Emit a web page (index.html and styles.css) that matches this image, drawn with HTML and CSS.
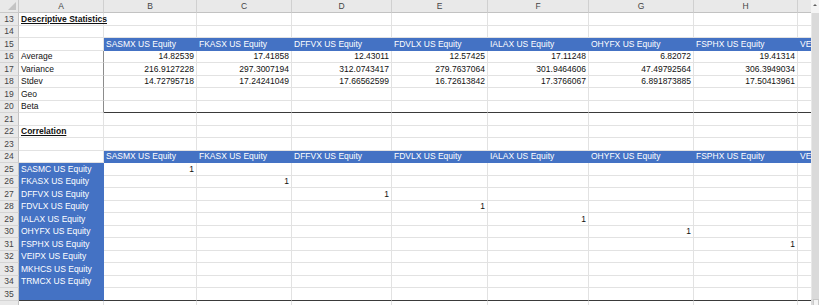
FILE: index.html
```html
<!DOCTYPE html>
<html lang="en">
<head>
    <meta charset="UTF-8">
    <title>Fund Statistics</title>
    <link rel="stylesheet" href="styles.css">
</head>
<body>
    <div class="window">
        <div class="sheet" id="sheet">
            <!-- cells are built by the script below -->
        </div>
        <div class="scrollbar">
            <div class="scroll-btn"><span class="arrow-up"></span></div>
            <div class="scroll-track"></div>
            <div class="scroll-end"></div>
        </div>
    </div>
    <script>
        const sheet = document.getElementById('sheet');
        const letters = ['A', 'B', 'C', 'D', 'E', 'F', 'G', 'H', 'I'];
        const tickers = ['SASMX', 'FKASX', 'DFFVX', 'FDVLX', 'IALAX', 'OHYFX', 'FSPHX', 'VEIPX'];
        const rowTickers = ['SASMC', 'FKASX', 'DFFVX', 'FDVLX', 'IALAX', 'OHYFX', 'FSPHX', 'VEIPX', 'MKHCS', 'TRMCX'];
        const stats = {
            16: ['Average', ['14.82539', '17.41858', '12.43011', '12.57425', '17.11248', '6.82072', '19.41314']],
            17: ['Variance', ['216.9127228', '297.3007194', '312.0743417', '279.7637064', '301.9464606', '47.49792564', '306.3949034']],
            18: ['Stdev', ['14.72795718', '17.24241049', '17.66562599', '16.72613842', '17.3766067', '6.891873885', '17.50413961']],
            19: ['Geo', []],
            20: ['Beta', []]
        };

        function cell(text, cls) {
            const div = document.createElement('div');
            div.className = 'cell' + (cls ? ' ' + cls : '');
            if (text) {
                const span = document.createElement('span');
                span.textContent = text;
                div.appendChild(span);
            }
            sheet.appendChild(div);
            return div;
        }

        // column headers
        cell('', 'corner');
        letters.forEach(l => cell(l, 'col-head'));

        for (let r = 13; r <= 35; r++) {
            cell(String(r), 'row-head');
            for (let c = 0; c < letters.length; c++) {
                let text = '';
                let cls = [];

                if (c === 0) {
                    if (r === 13) { text = 'Descriptive Statistics'; cls.push('title'); }
                    if (r === 22) { text = 'Correlation'; cls.push('title'); }
                    if (stats[r]) { text = stats[r][0]; cls.push('edge'); }
                    if (r >= 25 && r <= 35) {
                        cls.push('fill');
                        if (rowTickers[r - 25]) text = rowTickers[r - 25] + ' US Equity';
                    }
                } else {
                    if (r === 15 || r === 24) {
                        text = tickers[c - 1] + ' US Equity';
                        cls.push('fill');
                    }
                    if (stats[r] && stats[r][1][c - 1]) {
                        text = stats[r][1][c - 1];
                        cls.push('num');
                    }
                    if (r >= 25 && r - 25 === c - 1) {
                        text = '1';
                        cls.push('num');
                    }
                    if (r === 20) cls.push('rule');
                }
                if (r === 35) cls.push('rule');
                cell(text, cls.join(' '));
            }
        }

        // row 36 is only partly in view
        cell('', 'row-head');
        letters.forEach(() => cell(''));
    </script>
</body>
</html>
```

FILE: styles.css
```css
body {
    margin: 0;
    font-family: 'Liberation Sans', Arial, sans-serif;
    background-color: white;
    overflow: hidden;
}
.window {
    display: flex;
    width: 819px;
    height: 305px;
    overflow: hidden;
}
.sheet {
    display: grid;
    grid-template-columns: 19px 85px 93px 95px 100px 96px 101px 105px 104px 104px;
    grid-template-rows: 13px repeat(24, 12.5px);
    width: 811px;
    height: 305px;
    overflow: hidden;
}
.cell {
    box-sizing: border-box;
    display: flex;
    align-items: flex-end;
    padding: 0 2px 1px 2px;
    font-size: 8.5px;
    line-height: 10px;
    color: #111;
    white-space: nowrap;
    overflow: hidden;
    border-right: 1px solid #e2e2e2;
    border-bottom: 1px solid #e2e2e2;
}
.corner {
    position: relative;
    background-color: #e9e9e9;
    border-right: 1px solid #c9c9c9;
    border-bottom: 1px solid #c9c9c9;
}
.corner::after {
    content: '';
    position: absolute;
    right: 2px;
    bottom: 2px;
    border-left: 8px solid transparent;
    border-bottom: 8px solid #c4c4c4;
}
.col-head {
    justify-content: center;
    align-items: center;
    padding: 0;
    color: #444;
    background-color: #e9e9e9;
    border-right: 1px solid #d0d0d0;
    border-bottom: 1px solid #c2c2c2;
}
.row-head {
    justify-content: center;
    padding: 0 0 1px 0;
    color: #444;
    background-color: #e9e9e9;
    border-right: 1px solid #c2c2c2;
    border-bottom: 1px solid #d4d4d4;
}
.title {
    font-weight: bold;
    text-decoration: underline;
    overflow: visible;
    position: relative;
    z-index: 1;
}
.num {
    justify-content: flex-end;
}
.fill {
    background-color: #4472c4;
    border-color: #4472c4;
    color: white;
}
.edge {
    border-right-color: #8c8c8c;
}
.rule {
    border-bottom-color: #3a3a3a;
}
.scrollbar {
    display: flex;
    flex-direction: column;
    width: 8px;
    background-color: #dadada;
}
.scroll-btn {
    display: flex;
    justify-content: center;
    padding-top: 4px;
    height: 9px;
    background-color: #f4f4f4;
}
.arrow-up {
    border-left: 2px solid transparent;
    border-right: 2px solid transparent;
    border-bottom: 2px solid #606060;
    height: 0;
}
.scroll-track {
    flex: 1;
    border-left: 1px solid #e8e8e8;
}
.scroll-end {
    height: 5px;
    margin-left: 2px;
    background-color: #f4f4f4;
    border: 1px solid #c8c8c8;
    border-bottom: none;
}
```
